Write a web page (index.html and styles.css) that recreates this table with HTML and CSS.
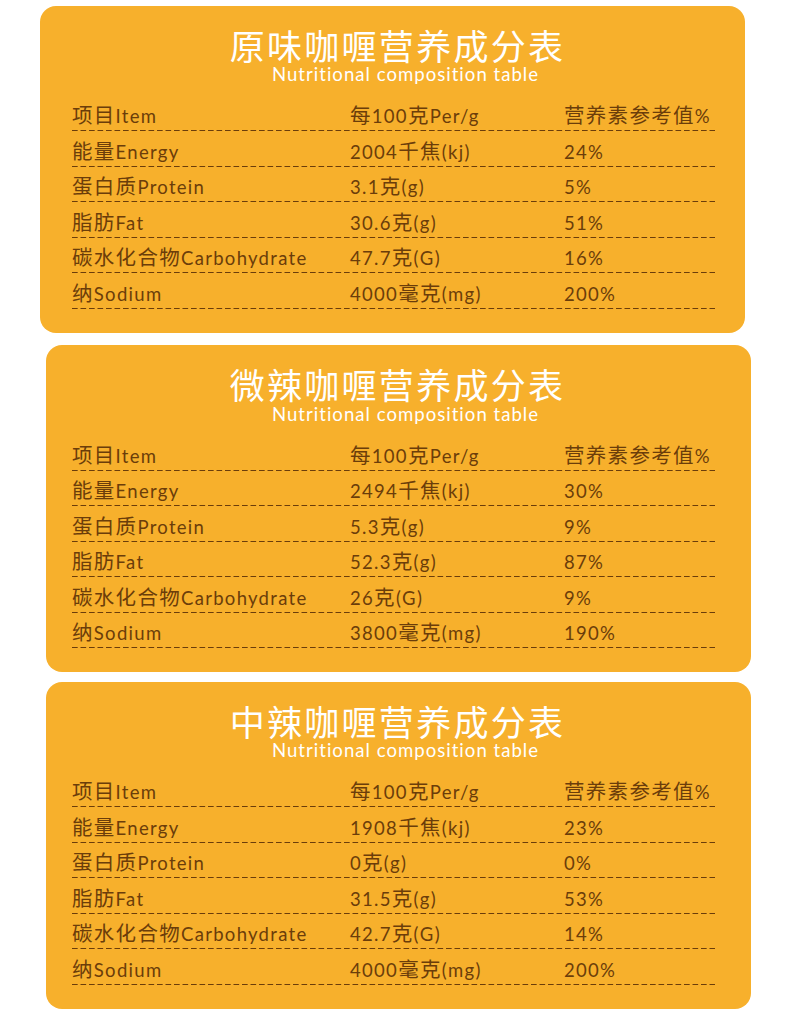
FILE: index.html
```html
<!DOCTYPE html>
<html lang="zh-CN">
<head>
<meta charset="utf-8">
<title>营养成分表</title>
<link rel="stylesheet" href="styles.css">
</head>
<body>
<div class="page">
  <section class="card card-1">
    <h2 class="title">原味咖喱营养成分表</h2>
    <p class="subtitle">Nutritional composition table</p>
    <div class="table">
      <div class="row"><span><span class="zh">项目</span>Item</span><span><span class="zh">每</span>100<span class="zh">克</span>Per/g</span><span><span class="zh">营养素参考值</span>%</span></div>
      <div class="row"><span><span class="zh">能量</span>Energy</span><span>2004<span class="zh">千焦</span>(kj)</span><span>24%</span></div>
      <div class="row"><span><span class="zh">蛋白质</span>Protein</span><span>3.1<span class="zh">克</span>(g)</span><span>5%</span></div>
      <div class="row"><span><span class="zh">脂肪</span>Fat</span><span>30.6<span class="zh">克</span>(g)</span><span>51%</span></div>
      <div class="row"><span><span class="zh">碳水化合物</span>Carbohydrate</span><span>47.7<span class="zh">克</span>(G)</span><span>16%</span></div>
      <div class="row"><span><span class="zh">纳</span>Sodium</span><span>4000<span class="zh">毫克</span>(mg)</span><span>200%</span></div>
    </div>
  </section>
  <section class="card card-2">
    <h2 class="title">微辣咖喱营养成分表</h2>
    <p class="subtitle">Nutritional composition table</p>
    <div class="table">
      <div class="row"><span><span class="zh">项目</span>Item</span><span><span class="zh">每</span>100<span class="zh">克</span>Per/g</span><span><span class="zh">营养素参考值</span>%</span></div>
      <div class="row"><span><span class="zh">能量</span>Energy</span><span>2494<span class="zh">千焦</span>(kj)</span><span>30%</span></div>
      <div class="row"><span><span class="zh">蛋白质</span>Protein</span><span>5.3<span class="zh">克</span>(g)</span><span>9%</span></div>
      <div class="row"><span><span class="zh">脂肪</span>Fat</span><span>52.3<span class="zh">克</span>(g)</span><span>87%</span></div>
      <div class="row"><span><span class="zh">碳水化合物</span>Carbohydrate</span><span>26<span class="zh">克</span>(G)</span><span>9%</span></div>
      <div class="row"><span><span class="zh">纳</span>Sodium</span><span>3800<span class="zh">毫克</span>(mg)</span><span>190%</span></div>
    </div>
  </section>
  <section class="card card-3">
    <h2 class="title">中辣咖喱营养成分表</h2>
    <p class="subtitle">Nutritional composition table</p>
    <div class="table">
      <div class="row"><span><span class="zh">项目</span>Item</span><span><span class="zh">每</span>100<span class="zh">克</span>Per/g</span><span><span class="zh">营养素参考值</span>%</span></div>
      <div class="row"><span><span class="zh">能量</span>Energy</span><span>1908<span class="zh">千焦</span>(kj)</span><span>23%</span></div>
      <div class="row"><span><span class="zh">蛋白质</span>Protein</span><span>0<span class="zh">克</span>(g)</span><span>0%</span></div>
      <div class="row"><span><span class="zh">脂肪</span>Fat</span><span>31.5<span class="zh">克</span>(g)</span><span>53%</span></div>
      <div class="row"><span><span class="zh">碳水化合物</span>Carbohydrate</span><span>42.7<span class="zh">克</span>(G)</span><span>14%</span></div>
      <div class="row"><span><span class="zh">纳</span>Sodium</span><span>4000<span class="zh">毫克</span>(mg)</span><span>200%</span></div>
    </div>
  </section>
</div>
</body>
</html>
```

FILE: styles.css
```css
html, body {
  margin: 0;
  padding: 0;
  background: #ffffff;
}

body {
  font-family: "Noto Sans CJK SC", "Noto Sans", sans-serif;
  color: #6b3d0a;
}

.page {
  display: flex;
  flex-direction: column;
  padding-top: 6px;
}

.card {
  box-sizing: border-box;
  width: 705px;
  background: #f7b02c;
  border-radius: 16px;
  padding: 20px 0 24px 32px;
}

.card-1 {
  margin-left: 40px;
}

.card-2 {
  margin-left: 46px;
  margin-top: 12.5px;
  padding-left: 26px;
}

.card-3 {
  margin-left: 46px;
  margin-top: 10px;
  padding-left: 26px;
}

.title {
  width: 643px;
  margin: 0;
  padding-left: 8px;
  box-sizing: border-box;
  text-align: center;
  color: #ffffff;
  font-family: "Noto Sans CJK SC", sans-serif;
  font-size: 35px;
  font-weight: 400;
  letter-spacing: 2.3px;
  line-height: 38px;
}

.subtitle {
  width: 643px;
  margin: 0;
  padding: 1.3px 0 0 24px;
  box-sizing: border-box;
  text-align: center;
  color: #ffffff;
  font-family: Lato, "Noto Sans CJK SC", sans-serif;
  font-size: 18.6px;
  letter-spacing: 1px;
  line-height: 19px;
}

.table {
  width: 643px;
  margin-top: 11.5px;
}

.row {
  display: grid;
  grid-template-columns: 278px 214px 1fr;
  height: 35.5px;
  box-sizing: border-box;
  padding-top: 7.6px;
  font-family: Lato, "Noto Sans CJK SC", sans-serif;
  font-size: 18.5px;
  letter-spacing: 1.3px;
  line-height: 26px;
  background-image: linear-gradient(to right, #6b3d0a 0, #6b3d0a 5.5px, transparent 5.5px, transparent 8.5px);
  background-size: 8.5px 1px;
  background-repeat: repeat-x;
  background-position: left bottom;
}

.row > span {
  white-space: nowrap;
}

.zh {
  font-family: "Noto Sans CJK SC", sans-serif;
  font-size: 20.5px;
  letter-spacing: 1.3px;
  line-height: 1;
}
```
